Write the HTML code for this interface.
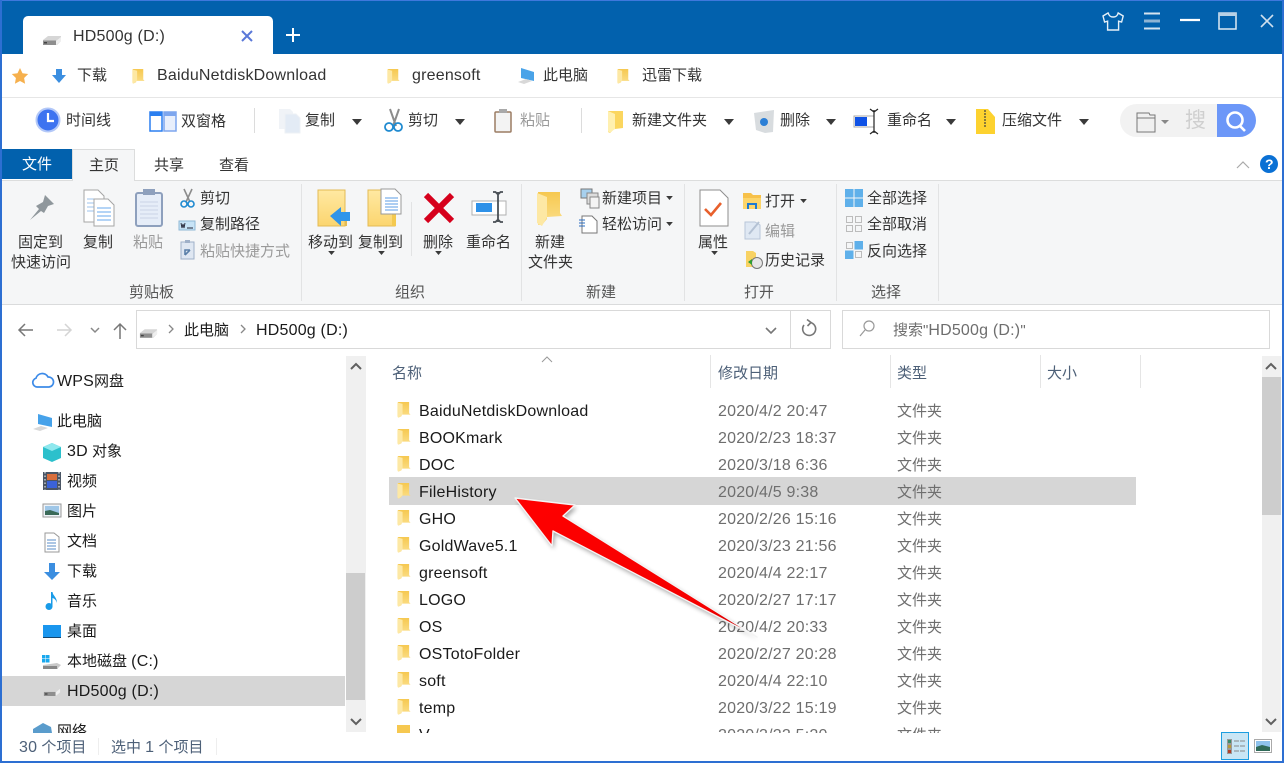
<!DOCTYPE html>
<html lang="zh"><head><meta charset="utf-8"><title>HD500g (D:)</title>
<style>
html,body{margin:0;padding:0;width:1284px;height:763px;overflow:hidden;background:#fff}
body{position:relative;font-family:"Liberation Sans","Noto Sans CJK SC",sans-serif;font-size:15px;color:#333}
.b{position:absolute}
.t{position:absolute;white-space:nowrap;line-height:20px;height:20px;font-size:15px;color:#333;margin-top:2px}
.l{font-size:16px;letter-spacing:.2px}
.g{color:#9a9a9a}
.f{color:#1a1a1a}
.d{color:#6e6e6e}
.h{color:#4d6078}
svg{position:absolute;left:0;top:0}
</style></head><body>
<!-- backgrounds -->
<div class="b" style="left:0;top:0;width:1284px;height:54px;background:#0261ad"></div>
<div class="b" style="left:23px;top:16px;width:250px;height:38px;background:#fff;border-radius:5px 5px 0 0"></div>
<div class="b" style="left:0;top:97px;width:1284px;height:1px;background:#e6e6e6"></div>
<div class="b" style="left:0;top:180px;width:1284px;height:125px;background:#f5f6f7;border-top:1px solid #dcdddd;border-bottom:1px solid #dadbdc;box-sizing:border-box"></div>
<div class="b" style="left:2px;top:149px;width:70px;height:30px;background:#0261ad"></div>
<div class="b" style="left:72px;top:149px;width:63px;height:32px;background:#f5f6f7;border:1px solid #dcdddd;border-bottom:0;box-sizing:border-box"></div>
<div class="b" style="left:301px;top:184px;width:1px;height:117px;background:#e2e3e4"></div>
<div class="b" style="left:521px;top:184px;width:1px;height:117px;background:#e2e3e4"></div>
<div class="b" style="left:684px;top:184px;width:1px;height:117px;background:#e2e3e4"></div>
<div class="b" style="left:836px;top:184px;width:1px;height:117px;background:#e2e3e4"></div>
<div class="b" style="left:938px;top:184px;width:1px;height:117px;background:#e2e3e4"></div>
<div class="b" style="left:411px;top:202px;width:1px;height:54px;background:#e2e3e4"></div>
<div class="b" style="left:254px;top:108px;width:1px;height:25px;background:#dcdcdc"></div>
<div class="b" style="left:581px;top:108px;width:1px;height:25px;background:#dcdcdc"></div>
<!-- address -->
<div class="b" style="left:136px;top:310px;width:695px;height:39px;border:1px solid #d9d9d9;box-sizing:border-box"></div>
<div class="b" style="left:790px;top:310px;width:1px;height:39px;background:#d9d9d9"></div>
<div class="b" style="left:842px;top:310px;width:428px;height:39px;border:1px solid #d9d9d9;box-sizing:border-box"></div>
<!-- selections -->
<div class="b" style="left:2px;top:676px;width:343px;height:30px;background:#d6d6d6"></div>
<div class="b" style="left:389px;top:477px;width:747px;height:28px;background:#d6d6d6"></div>
<!-- scrollbars -->
<div class="b" style="left:346px;top:356px;width:20px;height:376px;background:#f0f0f0"></div>
<div class="b" style="left:346px;top:573px;width:19px;height:127px;background:#cdcdcd"></div>
<div class="b" style="left:1262px;top:356px;width:19px;height:376px;background:#f0f0f0"></div>
<div class="b" style="left:1262px;top:377px;width:19px;height:138px;background:#cdcdcd"></div>
<!-- column separators -->
<div class="b" style="left:710px;top:355px;width:1px;height:33px;background:#e5e5e5"></div>
<div class="b" style="left:890px;top:355px;width:1px;height:33px;background:#e5e5e5"></div>
<div class="b" style="left:1040px;top:355px;width:1px;height:33px;background:#e5e5e5"></div>
<div class="b" style="left:1140px;top:355px;width:1px;height:33px;background:#e5e5e5"></div>
<!-- status -->
<div class="b" style="left:98px;top:738px;width:1px;height:17px;background:#eee"></div>
<div class="b" style="left:216px;top:738px;width:1px;height:17px;background:#eee"></div>
<div class="b" style="left:1221px;top:732px;width:28px;height:28px;background:#c9e6f5;border:1px solid #1c9ee0;box-sizing:border-box"></div>
<!-- search pill -->
<div class="b" style="left:1120px;top:104px;width:136px;height:33px;background:#f2f2f2;border-radius:17px;overflow:hidden">
<div class="b" style="left:97px;top:0;width:39px;height:33px;background:#6c97f8"></div>
<span class="b" style="left:65px;top:3px;width:22px;overflow:hidden;font-size:21px;line-height:28px;color:#cfcfcf;white-space:nowrap">搜索</span>
</div>

<!-- ICONS -->
<svg width="1284" height="763" viewBox="0 0 1284 763" fill="none">
<defs>
<linearGradient id="fy" x1="0" y1="0" x2="1" y2="0"><stop offset="0" stop-color="#fff0b4"/><stop offset=".55" stop-color="#ffe48f"/><stop offset="1" stop-color="#f8c94e"/></linearGradient>
<linearGradient id="fb" x1="0" y1="0" x2="0" y2="1"><stop offset="0" stop-color="#ffe9a2"/><stop offset="1" stop-color="#fbd56f"/></linearGradient>
<linearGradient id="fv" x1="0" y1="0" x2="0" y2="1"><stop offset="0" stop-color="#f6c850"/><stop offset="1" stop-color="#fbdf8a"/></linearGradient>
<linearGradient id="arr" x1="0" y1="0" x2="1" y2="1"><stop offset="0" stop-color="#ff0000"/><stop offset=".8" stop-color="#f50000"/><stop offset="1" stop-color="#b80000"/></linearGradient>
<filter id="sh" x="-20%" y="-20%" width="140%" height="140%"><feGaussianBlur stdDeviation="2.4"/></filter>
<symbol id="folder" viewBox="0 0 16 18" overflow="visible"><path d="M2 1h12v12l1.500 1.500H6v1.500L3 17.500H2z" fill="url(#fv)"/><path d="M1.500 1.500 7 3v11l-4 3.500-1.500-1z" fill="#fde8a4"/></symbol>
<symbol id="drive" viewBox="0 0 20 12" overflow="visible"><path d="M1 6 6 2h13v5l-4 4H1z" fill="#d6d6d6"/><path d="M1 6.500h13V11H1z" fill="#8e8e8e"/><path d="M2 8h3v1.500H2z" fill="#444"/><path d="M14 7l5-4v4l-5 4z" fill="#efefef"/></symbol>
<symbol id="car" viewBox="0 0 10 6" overflow="visible"><path d="M0 0h10L5 6z" fill="#3a3a3a"/></symbol>
</defs>
<!-- window border -->
<rect x="0" y="0" width="1284" height="1" fill="#3f78dc"/>
<rect x="0" y="0" width="2" height="763" fill="#2d6fd2"/>
<rect x="1282" y="0" width="2" height="763" fill="#2d6fd2"/>
<rect x="0" y="761" width="1284" height="2" fill="#2d6fd2"/>
<!-- tab -->
<use href="#drive" x="42" y="34" width="20" height="12"/>
<path d="M243 31l10 10M253 31l-10 10" stroke="#5a78d8" stroke-width="2" transform="translate(-1 0)"/>
<path d="M293 28v14M286 35h14" stroke="#fff" stroke-width="2"/>
<!-- title controls -->
<path d="M1108 13l-5 3 1.600 6 3-.8V30h11v-8.800l3 .8 1.600-6-5-3c-.8 2.800-2 4-5 4s-4.200-1.200-5-4z" stroke="#e6f0f8" stroke-width="1.400"/>
<path d="M1144 13.500h16M1144 28.500h16" stroke="#d6e4f0" stroke-width="2"/>
<path d="M1144 21h16" stroke="#8fb4d4" stroke-width="3"/>
<path d="M1180 20h20" stroke="#fff" stroke-width="2.200"/>
<rect x="1219" y="13" width="17" height="16" stroke="#dfeaf4" stroke-width="1.500"/><rect x="1219" y="12.500" width="17" height="3.500" fill="#b7d0e6"/>
<path d="M1261 15l12 12M1273 15l-12 12" stroke="#cfe0ee" stroke-width="1.600"/>
<!-- bookmarks -->
<path d="M20 68l2.500 5.200 5.700.8-4.100 4 1 5.700L20 81l-5.100 2.700 1-5.700-4.100-4 5.700-.8z" fill="#f6b04d"/>
<path d="M56 69h6v6h4l-7 8-7-8h4z" fill="#3b8ee0"/>
<use href="#folder" x="131" y="68" width="14" height="16"/>
<use href="#folder" x="386" y="68" width="14" height="16"/>
<use href="#folder" x="616" y="68" width="14" height="16"/>
<path d="M521 68l13 4v9l-13-3z" fill="#4aa3e8"/><path d="M518 82l8-3 6 2-8 3z" fill="#d8d8d8"/>
<!-- toolbar -->
<circle cx="48" cy="120" r="11.500" fill="#3d73f0" stroke="#b3c8f8" stroke-width="2"/><path d="M48 113v8h6" stroke="#fff" stroke-width="2.200"/>
<rect x="150" y="112" width="12" height="19" fill="#fff" stroke="#2b7ff0" stroke-width="1.500"/><rect x="150" y="112" width="12" height="4" fill="#2b7ff0"/>
<rect x="164" y="112" width="12" height="19" fill="#e8effc" stroke="#7da6ee" stroke-width="1.500"/><rect x="164" y="112" width="12" height="4" fill="#7da6ee"/>
<path d="M279 109h11l3 3v17h-14z" fill="#f0f3f7"/><path d="M285 114h11l4 4v15h-15z" fill="#e3ebf5" stroke="#eef1f5"/>
<path d="M390 109l6 17M399 109l-6 17" stroke="#8c8c8c" stroke-width="2"/><circle cx="389" cy="127" r="4" stroke="#1f8ad0" stroke-width="1.800"/><circle cx="398" cy="127" r="4" stroke="#1f8ad0" stroke-width="1.800"/>
<rect x="495" y="112" width="16" height="20" rx="1" fill="#f3f3f3" stroke="#9b7c63" stroke-width="1.500"/><rect x="499" y="109" width="8" height="4" fill="#a9a9a9"/>
<path d="M608 111h15v17l-8 1v-1l-5 5-2-1z" fill="#fbd65f"/><path d="M608 111l7 3v15l-5 3.500-2-1z" fill="#fff0b0"/>
<path d="M754 113l20-3-1 22-8 1-9-3z" fill="#d8dcdf"/><circle cx="764" cy="122" r="4" fill="#2b7fd6"/>
<rect x="855" y="117" width="12" height="9" fill="#0f52e6"/><rect x="854" y="116" width="20" height="11" stroke="#aaa"/>
<path d="M874 110v23M870 109l4 3 4-3M870 134l4-3 4 3" stroke="#222" stroke-width="1.200"/>
<path d="M976 109h12l7 8v17h-19z" fill="#fdd22f"/><path d="M985 110v17" stroke="#8a7a3a" stroke-width="2" stroke-dasharray="2 1"/>
<use href="#car" x="352" y="119" width="10" height="6"/><use href="#car" x="455" y="119" width="10" height="6"/>
<use href="#car" x="724" y="119" width="10" height="6"/><use href="#car" x="826" y="119" width="10" height="6"/>
<use href="#car" x="946" y="119" width="10" height="6"/><use href="#car" x="1079" y="119" width="10" height="6"/>
<path d="M1137 115h12l1 2h5v17h-18z" transform="translate(0 -2)" fill="#f0f0f0" stroke="#777"/><path d="M1137 118h18" stroke="#777"/>
<path d="M1161 120h8l-4 4z" fill="#888"/>
<circle cx="1235" cy="120" r="7.500" stroke="#fff" stroke-width="2.600"/><path d="M1240 126l5 5" stroke="#fff" stroke-width="2.600"/>
<!-- collapse + help -->
<path d="M1237 168l6-6 6 6" stroke="#aaa" stroke-width="1.200"/>
<circle cx="1269" cy="164" r="9" fill="#0a70d4"/>
<!-- ribbon: clipboard -->
<path d="M45 195l9 9-6 2-4 7-3-2-11 9 9-11-3-3 7-4z" fill="#8f979c"/>
<path d="M84 190h14l6 6v26H84z" fill="#fff" stroke="#a5a5a5"/><path d="M87 199h13M87 203h13M87 207h13M87 211h13" stroke="#9cc3ec"/>
<path d="M94 199h14l6 6v21H94z" fill="#fff" stroke="#a5a5a5"/><path d="M97 208h14M97 212h14M97 216h14M97 220h14" stroke="#6aa8ec"/>
<rect x="136" y="193" width="26" height="33" rx="2" fill="#e6edf8" stroke="#8ea0bd" stroke-width="2"/><path d="M140 202h18M140 206h18M140 210h18M140 214h18M140 218h18" stroke="#c9d4e6"/><rect x="143" y="189" width="12" height="6" fill="#8ea0bd"/>
<path d="M184 189l6 13M192 189l-6 13" stroke="#8c8c8c" stroke-width="1.600"/><circle cx="184" cy="204" r="3" stroke="#1f8ad0" stroke-width="1.600"/><circle cx="191" cy="204" r="3" stroke="#1f8ad0" stroke-width="1.600"/>
<rect x="179" y="221" width="16" height="9" fill="#c7e3f6" stroke="#8fb8d6"/><path d="M181 223l1 5 1-4 1 4 1-5M187 228h6" stroke="#223" stroke-width=".9"/>
<rect x="181" y="242" width="13" height="17" fill="#dfe7f2" stroke="#9fb0c8"/><rect x="185" y="240" width="5" height="3" fill="#9fb0c8"/><path d="M185 255v-5h5m-5 5l5-5" stroke="#5a7fa8" stroke-width="1.600"/>
<!-- organise -->
<rect x="318" y="190" width="27" height="36" fill="url(#fb)" stroke="#e3bb54"/><rect x="345" y="212" width="2" height="14" fill="#e3bb54"/>
<path d="M330 216l11-9v5h9v9h-9v5z" fill="#2f95ea"/>
<path d="M368 190h27v36h-27z" fill="url(#fb)" stroke="#e3bb54"/><path d="M392 212h4v14h-4z" fill="#f4c94f"/>
<path d="M381 189h14l6 6v19h-20z" fill="#fff" stroke="#999"/><path d="M385 198h13M385 201h13M385 204h13M385 207h13M385 210h13" stroke="#5b9de4"/>
<path d="M426 195l13 13 13-13M426 221l13-13 13 13" stroke="#d6001c" stroke-width="6"/>
<rect x="472" y="201" width="34" height="14" fill="#fff" stroke="#b0b0b0"/><rect x="476" y="203" width="16" height="9" fill="#2e91e8"/>
<path d="M498 192v30M493 192h2.500l2.500 2.500 2.500-2.500h2.500M493 222h2.500l2.500-2.500 2.500 2.500h2.500" stroke="#4a5056" stroke-width="1.800"/>
<use href="#car" x="327" y="251" width="9" height="4"/><use href="#car" x="377" y="251" width="9" height="4"/><use href="#car" x="434" y="251" width="9" height="4"/>
<!-- new -->
<path d="M538 192h22v21l2 3-15 1v2l-5 6h-4z" fill="url(#fv)"/><path d="M537 193l10 4v20l-5 9-5-3z" fill="#fde8a4"/>
<rect x="581" y="189" width="11" height="9" fill="#a7d0ee" stroke="#777"/><rect x="587" y="193" width="11" height="11" fill="#ddd" stroke="#888"/><rect x="590" y="197" width="9" height="11" fill="#f4f4f4" stroke="#888"/>
<use href="#car" x="666" y="196" width="7" height="4"/><use href="#car" x="666" y="222" width="7" height="4"/>
<path d="M582 216h10l5 5v12h-15z" fill="#fff" stroke="#777"/><path d="M579 220h6M579 223h6M579 226h6" stroke="#2a6cc0"/>
<!-- open -->
<path d="M700 190h20l8 8v28h-28z" fill="#fff" stroke="#8e8e8e"/><path d="M705 209l6 6 10-12" stroke="#e8602c" stroke-width="2.600"/>
<use href="#car" x="710" y="251" width="9" height="4"/>
<path d="M743 193h8l2 2h8v14h-18z" fill="#f7c14a"/><rect x="743" y="198" width="18" height="11" fill="#fcd56a"/><rect x="747" y="203" width="10" height="6" fill="#1f7ad0"/><rect x="749" y="205" width="6" height="4" fill="#fcd56a"/>
<path d="M745 222h10l5 3v14h-15z" fill="#dfe8f3" stroke="#b8c6d8"/><path d="M749 234l10-12" stroke="#b4c2d4" stroke-width="2"/>
<path d="M746 251h7l3 2v14h-10z" fill="#f8d263"/><circle cx="757" cy="263" r="5.500" fill="#e6e6e6" stroke="#777"/><path d="M748 262l4-3v6z" fill="#2f9e33"/>
<use href="#car" x="800" y="199" width="7" height="4"/>
<!-- select -->
<g fill="#5fb0ea"><rect x="845" y="189" width="8.500" height="8.500"/><rect x="854.500" y="189" width="8.500" height="8.500"/><rect x="845" y="198.500" width="8.500" height="8.500"/><rect x="854.500" y="198.500" width="8.500" height="8.500"/></g>
<g stroke="#bcbcbc" fill="#f5f6f7"><rect x="846.500" y="216.500" width="6" height="6"/><rect x="855.500" y="216.500" width="6" height="6"/><rect x="846.500" y="225.500" width="6" height="6"/><rect x="855.500" y="225.500" width="6" height="6"/></g>
<g stroke="#bcbcbc" fill="#f5f6f7"><rect x="846.500" y="242.500" width="6" height="6"/><rect x="855.500" y="251.500" width="6" height="6"/></g>
<g fill="#5fb0ea"><rect x="854.500" y="241" width="8.500" height="8.500"/><rect x="845" y="250.500" width="8.500" height="8.500"/></g>
<!-- address icons -->
<path d="M33 330H19m6-6-6 6 6 6" stroke="#777" stroke-width="1.500"/>
<path d="M57 330h14m-6-6 6 6-6 6" stroke="#d4d4d4" stroke-width="1.500"/>
<path d="M91 328l4 4 4-4" stroke="#888" stroke-width="1.500"/>
<path d="M120 339v-15m-6 6 6-6 6 6" stroke="#777" stroke-width="1.500"/>
<use href="#drive" x="139" y="327" width="19" height="12"/>
<path d="M169 325l4 4-4 4" stroke="#888" stroke-width="1.300"/><path d="M241 325l4 4-4 4" stroke="#888" stroke-width="1.300"/>
<path d="M766 328l5 5 5-5" stroke="#777" stroke-width="1.600"/>
<path d="M804 325a6.500 6.500 0 1 0 6-2.500" stroke="#777" stroke-width="1.600"/><path d="M807 319.500l4 3-3.500 3.500" stroke="#777" stroke-width="1.600"/>
<circle cx="869" cy="326" r="5" stroke="#999" stroke-width="1.200"/><path d="M865 330l-5 6" stroke="#999" stroke-width="1.200"/>
<path d="M542 362l5-5 5 5" stroke="#999" stroke-width="1"/>
<!-- sidebar -->
<path d="M37 387a4.500 4.500 0 0 1-1-8.800 6.500 6.500 0 0 1 12-1.200 5 5 0 0 1 1 10z" stroke="#3d8be8" stroke-width="1.700"/>
<path d="M38 414l14 4v9l-14-3z" fill="#46a2ea"/><path d="M33 429l8-3 7 2-8 3z" fill="#d8d8d8"/>
<path d="M43 447l9-4 9 4v11l-9 4-9-4z" fill="#2cc0cc"/><path d="M43 447l9 4 9-4-9-4z" fill="#8fe8ee"/>
<rect x="43" y="472" width="18" height="18" fill="#4a5564"/><rect x="47" y="474" width="10" height="6" fill="#d96e3c"/><rect x="47" y="481" width="10" height="7" fill="#3a62d8"/>
<path d="M45 472v18M59 472v18" stroke="#fff" stroke-width="1" stroke-dasharray="1.500 2"/>
<rect x="43" y="504" width="18" height="13" fill="#eef3f8" stroke="#999"/><rect x="45" y="506" width="14" height="9" fill="#9fc7e8"/><path d="M45 515v-4l5-1 9 3v2z" fill="#3a6a58"/>
<path d="M45 533h9l5 4v15H45z" fill="#fff" stroke="#999"/><path d="M47 540h9M47 543h9M47 546h9M47 549h9" stroke="#5a8cc8"/>
<path d="M49 563h6v9h5l-8 8-8-8h5z" fill="#3b8ee0"/>
<path d="M51 592h1.500c.5 4 4.500 5 4.500 11-1-3-2.500-4.500-4.500-5v9h-1.500z" fill="#199be8"/><circle cx="49" cy="606.500" r="3.500" fill="#199be8"/>
<rect x="43" y="625" width="18" height="12" fill="#1a96ee"/><rect x="43" y="637" width="18" height="1" fill="#15466e"/>
<g fill="#19a8ee"><rect x="42" y="655" width="3.500" height="3.500"/><rect x="46" y="655" width="3.500" height="3.500"/><rect x="42" y="659" width="3.500" height="3.500"/><rect x="46" y="659" width="3.500" height="3.500"/></g>
<path d="M43 665l14-2 4 2-3 3v1H43z" fill="#c9c9c9"/><rect x="43" y="666" width="14" height="3" fill="#888"/>
<use href="#drive" x="43" y="686" width="18" height="11"/>
<path d="M33 733v-4l10-6 8 4 1 6z" fill="#5a9ccc"/>
<path d="M351 369l5-5 5 5" stroke="#606060" stroke-width="2"/>
<path d="M351 719l5 5 5-5" stroke="#606060" stroke-width="2"/>
<path d="M1266 369l5-5 5 5" stroke="#606060" stroke-width="2"/>
<path d="M1266 719l5 5 5-5" stroke="#606060" stroke-width="2"/>
<!-- view -->
<g stroke="#999"><rect x="1227.500" y="739.500" width="4" height="4" fill="#3a8a6a"/><rect x="1227.500" y="744.500" width="4" height="4" fill="#b89a3a"/><rect x="1227.500" y="749.500" width="4" height="4" fill="#b0402a"/></g>
<path d="M1234 741h11M1234 746h11M1234 751h11" stroke="#888" stroke-dasharray="5 1"/>
<rect x="1254.500" y="739.500" width="17" height="13" fill="#fff" stroke="#aaa"/><rect x="1256" y="741" width="14" height="10" fill="#8ec2ec"/><path d="M1256 751v-4l6-2 8 2v4z" fill="#2f6a58"/>
<!-- file list folders -->
<use href="#folder" x="396" y="401" width="15" height="17"/>
<use href="#folder" x="396" y="428" width="15" height="17"/>
<use href="#folder" x="396" y="455" width="15" height="17"/>
<use href="#folder" x="396" y="482" width="15" height="17"/>
<use href="#folder" x="396" y="509" width="15" height="17"/>
<use href="#folder" x="396" y="536" width="15" height="17"/>
<use href="#folder" x="396" y="563" width="15" height="17"/>
<use href="#folder" x="396" y="590" width="15" height="17"/>
<use href="#folder" x="396" y="617" width="15" height="17"/>
<use href="#folder" x="396" y="644" width="15" height="17"/>
<use href="#folder" x="396" y="671" width="15" height="17"/>
<use href="#folder" x="396" y="698" width="15" height="17"/>
<path d="M397 725h13v8h-13z" fill="#f6c850"/>
</svg>

<!-- TEXT: tab & bookmarks -->
<span class="t" style="left:73px;top:25px"><span class="l">HD500g (D:)</span></span>
<span class="t" style="left:77px;top:64px">下载</span>
<span class="t" style="left:157px;top:64px"><span class="l">BaiduNetdiskDownload</span></span>
<span class="t" style="left:412px;top:64px"><span class="l">greensoft</span></span>
<span class="t" style="left:543px;top:64px">此电脑</span>
<span class="t" style="left:642px;top:64px">迅雷下载</span>
<!-- toolbar -->
<span class="t" style="left:66px;top:109px">时间线</span>
<span class="t" style="left:181px;top:110px">双窗格</span>
<span class="t" style="left:305px;top:109px">复制</span>
<span class="t" style="left:408px;top:109px">剪切</span>
<span class="t g" style="left:520px;top:109px">粘贴</span>
<span class="t" style="left:632px;top:109px">新建文件夹</span>
<span class="t" style="left:780px;top:109px">删除</span>
<span class="t" style="left:887px;top:109px">重命名</span>
<span class="t" style="left:1002px;top:109px">压缩文件</span>
<!-- ribbon tabs -->
<span class="t" style="left:22px;top:153px;color:#fff">文件</span>
<span class="t" style="left:89px;top:154px">主页</span>
<span class="t" style="left:154px;top:154px">共享</span>
<span class="t" style="left:219px;top:154px">查看</span>
<span class="t" style="left:1265px;top:152px;color:#fff;font-weight:bold;font-size:14px">?</span>
<!-- ribbon -->
<span class="t" style="left:18px;top:231px">固定到</span>
<span class="t" style="left:11px;top:251px">快速访问</span>
<span class="t" style="left:83px;top:231px">复制</span>
<span class="t g" style="left:133px;top:231px">粘贴</span>
<span class="t" style="left:200px;top:187px">剪切</span>
<span class="t" style="left:200px;top:213px">复制路径</span>
<span class="t g" style="left:200px;top:240px">粘贴快捷方式</span>
<span class="t" style="left:129px;top:281px;color:#555">剪贴板</span>
<span class="t" style="left:308px;top:231px">移动到</span>
<span class="t" style="left:358px;top:231px">复制到</span>
<span class="t" style="left:423px;top:231px">删除</span>
<span class="t" style="left:466px;top:231px">重命名</span>
<span class="t" style="left:395px;top:281px;color:#555">组织</span>
<span class="t" style="left:535px;top:231px">新建</span>
<span class="t" style="left:528px;top:251px">文件夹</span>
<span class="t" style="left:602px;top:187px">新建项目</span>
<span class="t" style="left:602px;top:213px">轻松访问</span>
<span class="t" style="left:586px;top:281px;color:#555">新建</span>
<span class="t" style="left:698px;top:231px">属性</span>
<span class="t" style="left:765px;top:190px">打开</span>
<span class="t g" style="left:765px;top:220px">编辑</span>
<span class="t" style="left:765px;top:249px">历史记录</span>
<span class="t" style="left:744px;top:281px;color:#555">打开</span>
<span class="t" style="left:867px;top:187px">全部选择</span>
<span class="t" style="left:867px;top:213px">全部取消</span>
<span class="t" style="left:867px;top:240px">反向选择</span>
<span class="t" style="left:871px;top:281px;color:#555">选择</span>
<!-- address -->
<span class="t f" style="left:184px;top:319px">此电脑</span>
<span class="t f" style="left:256px;top:319px"><span class="l">HD500g (D:)</span></span>
<span class="t d" style="left:893px;top:319px">搜索"<span class="l">HD500g (D:)</span>"</span>
<!-- sidebar -->
<span class="t f" style="left:57px;top:370px"><span class="l">WPS</span>网盘</span>
<span class="t f" style="left:57px;top:410px">此电脑</span>
<span class="t f" style="left:67px;top:440px"><span class="l">3D</span> 对象</span>
<span class="t f" style="left:67px;top:470px">视频</span>
<span class="t f" style="left:67px;top:500px">图片</span>
<span class="t f" style="left:67px;top:530px">文档</span>
<span class="t f" style="left:67px;top:560px">下载</span>
<span class="t f" style="left:67px;top:590px">音乐</span>
<span class="t f" style="left:67px;top:620px">桌面</span>
<span class="t f" style="left:67px;top:650px">本地磁盘 <span class="l">(C:)</span></span>
<span class="t f" style="left:67px;top:680px"><span class="l">HD500g (D:)</span></span>
<div class="b" style="left:57px;top:720px;width:60px;height:13px;overflow:hidden"><span class="t f" style="left:0;top:0">网络</span></div>
<!-- headers -->
<span class="t h" style="left:392px;top:362px">名称</span>
<span class="t h" style="left:718px;top:362px">修改日期</span>
<span class="t h" style="left:897px;top:362px">类型</span>
<span class="t h" style="left:1047px;top:362px">大小</span>
<!-- files -->
<span class="t f" style="left:419px;top:400px"><span class="l">BaiduNetdiskDownload</span></span><span class="t d" style="left:718px;top:400px"><span class="l">2020/4/2 20:47</span></span><span class="t d" style="left:897px;top:400px">文件夹</span>
<span class="t f" style="left:419px;top:427px"><span class="l">BOOKmark</span></span><span class="t d" style="left:718px;top:427px"><span class="l">2020/2/23 18:37</span></span><span class="t d" style="left:897px;top:427px">文件夹</span>
<span class="t f" style="left:419px;top:454px"><span class="l">DOC</span></span><span class="t d" style="left:718px;top:454px"><span class="l">2020/3/18 6:36</span></span><span class="t d" style="left:897px;top:454px">文件夹</span>
<span class="t f" style="left:419px;top:481px"><span class="l">FileHistory</span></span><span class="t d" style="left:718px;top:481px"><span class="l">2020/4/5 9:38</span></span><span class="t d" style="left:897px;top:481px">文件夹</span>
<span class="t f" style="left:419px;top:508px"><span class="l">GHO</span></span><span class="t d" style="left:718px;top:508px"><span class="l">2020/2/26 15:16</span></span><span class="t d" style="left:897px;top:508px">文件夹</span>
<span class="t f" style="left:419px;top:535px"><span class="l">GoldWave5.1</span></span><span class="t d" style="left:718px;top:535px"><span class="l">2020/3/23 21:56</span></span><span class="t d" style="left:897px;top:535px">文件夹</span>
<span class="t f" style="left:419px;top:562px"><span class="l">greensoft</span></span><span class="t d" style="left:718px;top:562px"><span class="l">2020/4/4 22:17</span></span><span class="t d" style="left:897px;top:562px">文件夹</span>
<span class="t f" style="left:419px;top:589px"><span class="l">LOGO</span></span><span class="t d" style="left:718px;top:589px"><span class="l">2020/2/27 17:17</span></span><span class="t d" style="left:897px;top:589px">文件夹</span>
<span class="t f" style="left:419px;top:616px"><span class="l">OS</span></span><span class="t d" style="left:718px;top:616px"><span class="l">2020/4/2 20:33</span></span><span class="t d" style="left:897px;top:616px">文件夹</span>
<span class="t f" style="left:419px;top:643px"><span class="l">OSTotoFolder</span></span><span class="t d" style="left:718px;top:643px"><span class="l">2020/2/27 20:28</span></span><span class="t d" style="left:897px;top:643px">文件夹</span>
<span class="t f" style="left:419px;top:670px"><span class="l">soft</span></span><span class="t d" style="left:718px;top:670px"><span class="l">2020/4/4 22:10</span></span><span class="t d" style="left:897px;top:670px">文件夹</span>
<span class="t f" style="left:419px;top:697px"><span class="l">temp</span></span><span class="t d" style="left:718px;top:697px"><span class="l">2020/3/22 15:19</span></span><span class="t d" style="left:897px;top:697px">文件夹</span>
<div class="b" style="left:389px;top:724px;width:747px;height:9px;overflow:hidden"><span class="t f" style="left:30px;top:0"><span class="l">V</span></span><span class="t d" style="left:329px;top:0"><span class="l">2020/3/22 5:20</span></span><span class="t d" style="left:508px;top:0">文件夹</span></div>
<!-- status -->
<span class="t h" style="left:19px;top:736px"><span class="l">30</span> 个项目</span>
<span class="t h" style="left:111px;top:736px">选中 <span class="l">1</span> 个项目</span>

<!-- Arrow on top -->
<svg width="1284" height="763" viewBox="0 0 1284 763" fill="none">
<path d="M515 498 575 505 563 516 757 637 553 531 552 546z" fill="#000" opacity=".35" filter="url(#sh)" transform="translate(2 3)"/>
<path d="M515 498 575 505 563 516 757 637 553 531 552 546z" fill="url(#arr)" stroke="#f4f4f4" stroke-width="1.400" stroke-linejoin="round"/>
</svg>
</body></html>
